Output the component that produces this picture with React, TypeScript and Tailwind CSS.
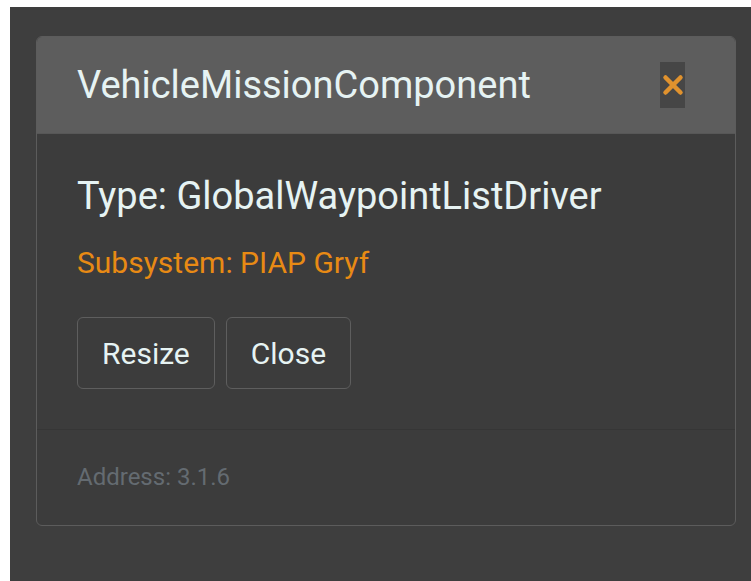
import { X } from "lucide-react";

const font = { fontFamily: "Roboto, 'Noto Sans', sans-serif" };

function ModalButton({ label }: { label: string }) {
  return (
    <button
      type="button"
      className="h-[72px] rounded-[6px] border border-[#5e5e5e] bg-[#3c3c3c] px-[24px] text-[30px] text-[#e6f3f3]"
    >
      {label}
    </button>
  );
}

export default function App() {
  return (
    <div className="h-[581px] w-full bg-white pl-[10px] pt-[7px]" style={font}>
      <div className="h-full bg-[#3e3e3e] pl-[26px] pt-[29px]">
        <div className="w-[700px] overflow-hidden rounded-[6px] border border-[#5c5c5c] bg-[#3c3c3c]">
          <div className="flex h-[97px] items-center justify-between border-b border-[#575757] bg-[#5d5d5d] pl-[40px] pr-[50px]">
            <h5 className="text-[38px] leading-none text-[#e6f3f3]">VehicleMissionComponent</h5>
            <button
              type="button"
              className="flex h-[46px] w-[25px] items-center justify-center overflow-visible bg-[#464646]"
              aria-label="Close"
            >
              <X size={30} strokeWidth={3.6} className="shrink-0 text-[#e0922e]" />
            </button>
          </div>

          <div className="px-[40px] pb-[40px] pt-[42px]">
            <div className="text-[38px] leading-[40px] text-[#e6f3f3]">
              Type: GlobalWaypointListDriver
            </div>
            <div className="mt-[30px] text-[30px] leading-[34px] text-[#e88a14]">
              Subsystem: PIAP Gryf
            </div>
            <div className="mt-[37px] flex gap-[11px]">
              <ModalButton label="Resize" />
              <ModalButton label="Close" />
            </div>
          </div>

          <div className="border-t border-[#363636] px-[40px] pb-[33px] pt-[34px]">
            <span className="text-[24px] leading-[26px] text-[#646b71]">Address: 3.1.6</span>
          </div>
        </div>
      </div>
    </div>
  );
}
